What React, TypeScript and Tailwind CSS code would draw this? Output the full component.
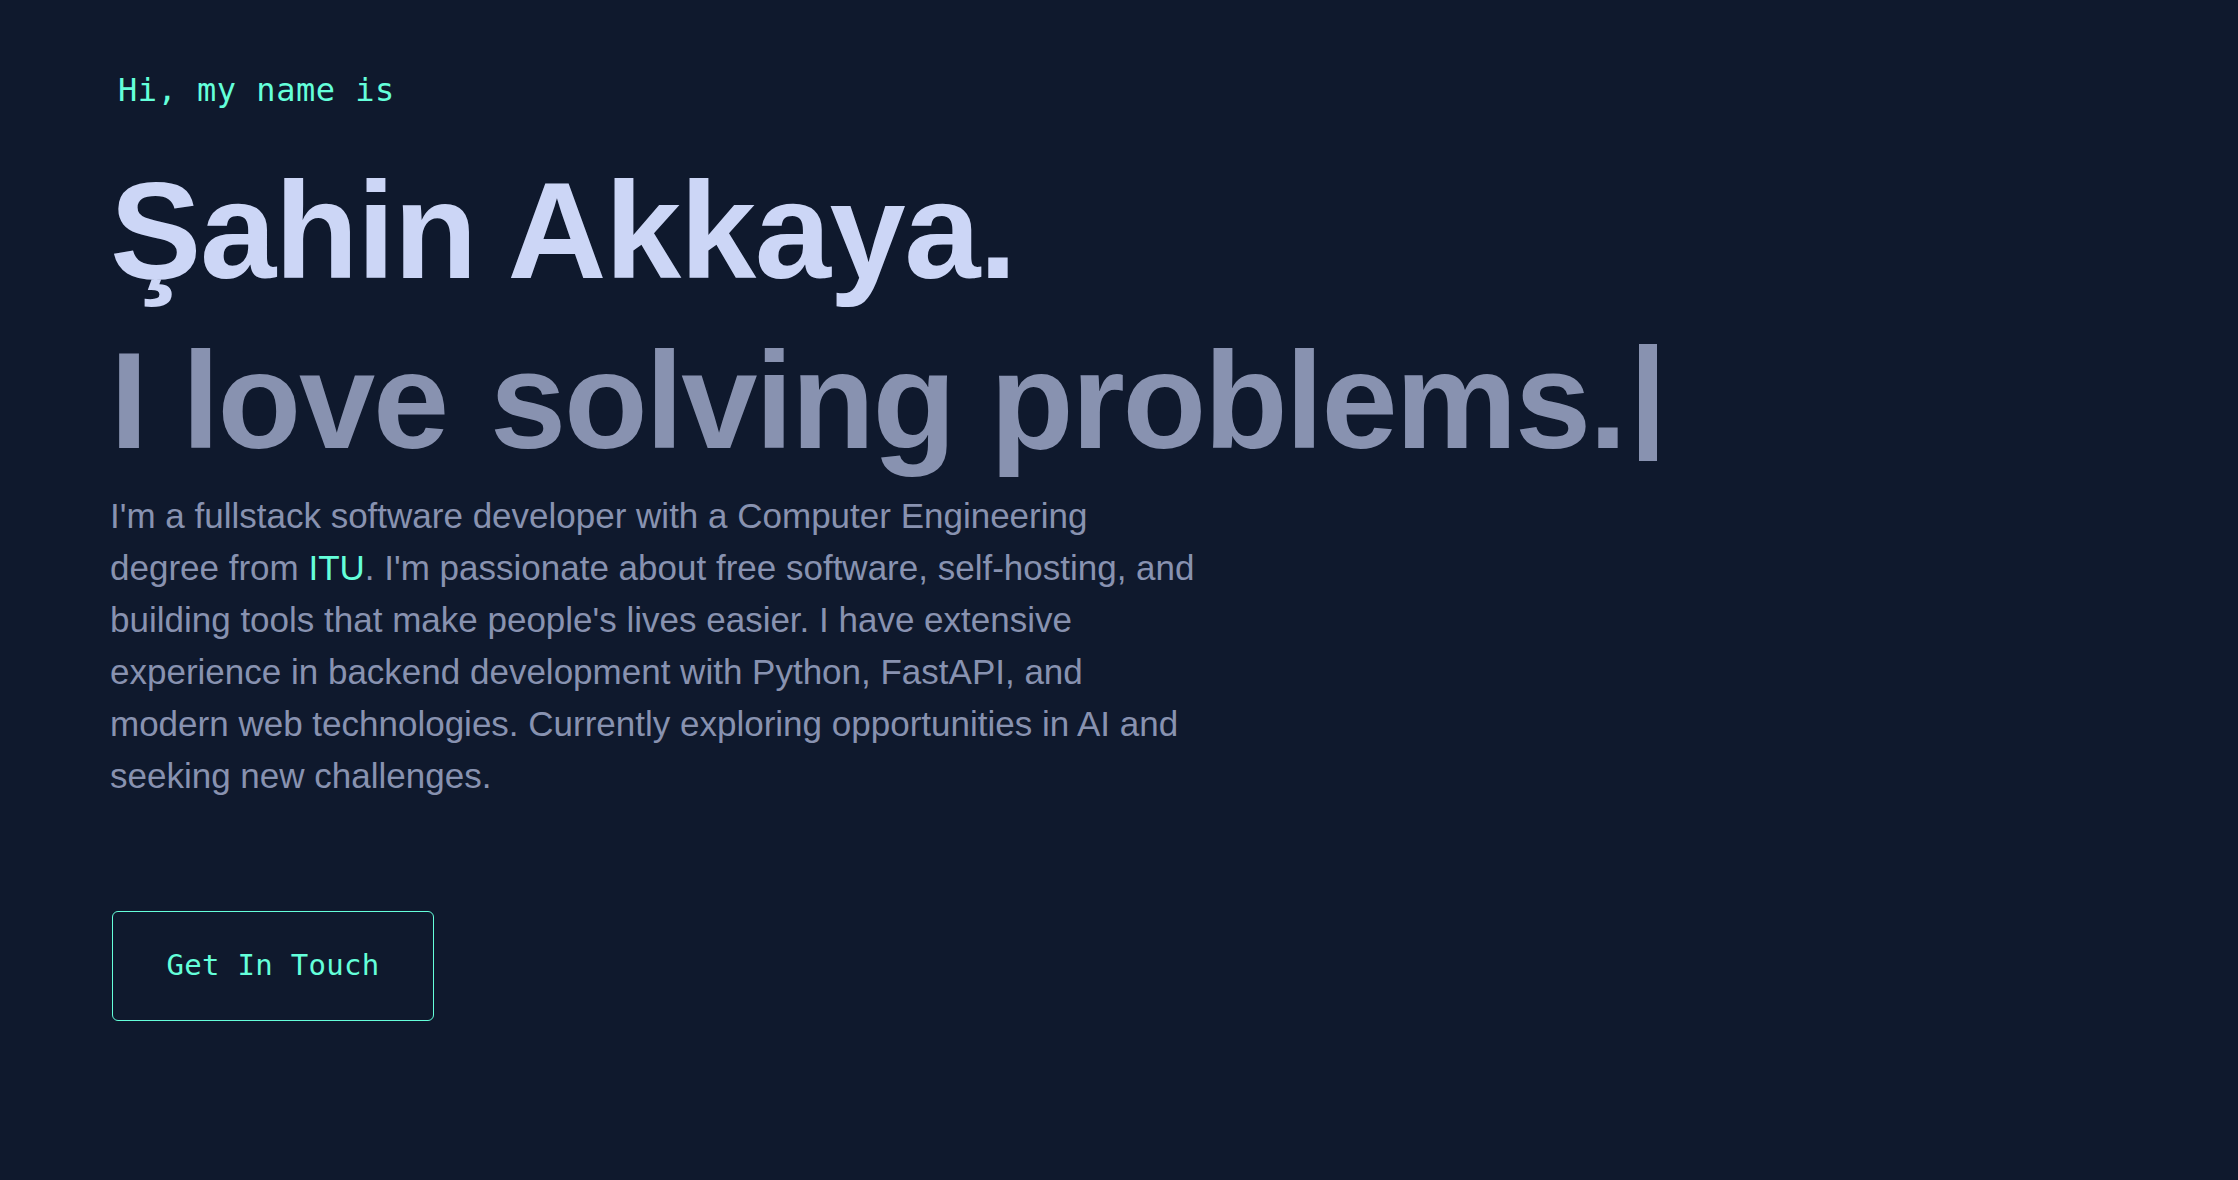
export default function App() {
  return (
    <div className="min-h-screen w-full bg-[#0f192d] pl-[110px] pt-[66px]">
      <section className="flex flex-col items-start">
        <p className="ml-[8px] mb-[32px] text-[32px] leading-[48px] tracking-[0.5px] text-[#64ffda] font-['DejaVu_Sans_Mono',monospace]">
          Hi, my name is
        </p>

        <h1 className="text-[137px] leading-[170px] font-bold tracking-[-1.4px] text-[#ccd6f6] whitespace-nowrap font-['Liberation_Sans',Arial,sans-serif]">
          Şahin Akkaya.
        </h1>
        <h2 className="text-[137px] leading-[170px] font-bold tracking-[-2.2px] text-[#8892b0] whitespace-nowrap font-['Liberation_Sans',Arial,sans-serif]">
          <span>I love </span>
          <span className="ml-[7px]">solving problems.</span>
          <span className="ml-[14px] inline-block w-[18px] h-[117px] bg-[#8892b0] align-[-13px]" />
        </h2>

        <p className="mt-[4px] max-w-[1090px] text-[35px] leading-[52px] text-[#8892b0] font-['Liberation_Sans',Arial,sans-serif]">
          I'm a fullstack software developer with a Computer Engineering degree from{' '}
          <a href="#" className="text-[#64ffda]">ITU</a>. I'm passionate about free software,
          self-hosting, and building tools that make people's lives easier. I have extensive
          experience in backend development with Python, FastAPI, and modern web technologies.
          Currently exploring opportunities in AI and seeking new challenges.
        </p>

        <button className="mt-[109px] ml-[2px] flex h-[110px] w-[322px] items-center justify-center rounded-md border border-[#64ffda] text-[29px] tracking-[0.3px] text-[#64ffda] font-['DejaVu_Sans_Mono',monospace]">
          Get In Touch
        </button>
      </section>
    </div>
  );
}
